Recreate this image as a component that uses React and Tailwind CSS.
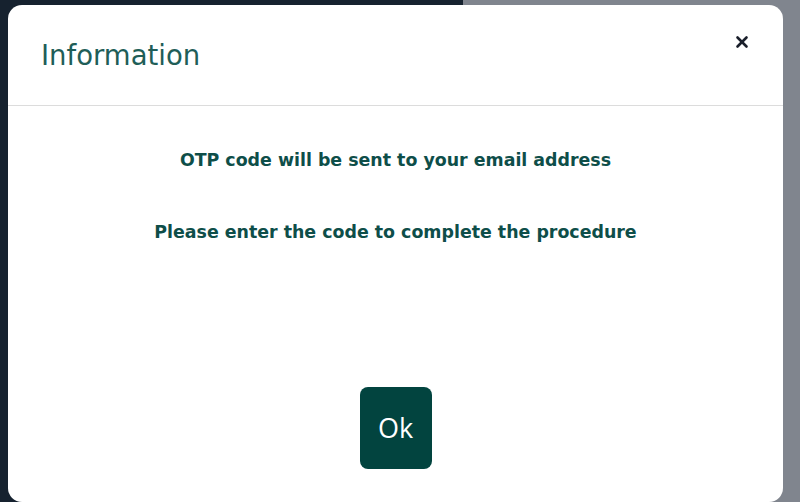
import { X } from "lucide-react";

export default function App() {
  return (
    <div className="relative h-[502px] w-[800px] overflow-hidden">
      {/* page behind the dialog */}
      <div className="flex h-full w-full">
        <div className="w-[463px] bg-[#16222f]" />
        <div className="flex-1 bg-[#80858e]" />
      </div>

      {/* dialog */}
      <div
        className="absolute left-[8px] top-[5px] flex h-[497px] w-[775px] flex-col rounded-[14px] bg-white"
        style={{ fontFamily: '"DejaVu Sans", Verdana, sans-serif' }}
      >
        <div className="flex h-[101px] items-start justify-between border-b border-[#dcdcdc] pl-[33px] pr-[32px]">
          <h2 className="mt-[32px] text-[27.5px] leading-[36px] font-normal text-[#1f5e58]">
            Information
          </h2>
          <button className="mt-[28px] text-[#1a1f2b]">
            <X className="h-[18px] w-[18px]" strokeWidth={3.5} />
          </button>
        </div>

        <div className="flex flex-1 flex-col items-center">
          <p className="mt-[42px] text-[17.4px] leading-[24px] font-bold text-[#0e4e49]">
            OTP code will be sent to your email address
          </p>
          <p className="mt-[48px] text-[17.4px] leading-[24px] font-bold text-[#0e4e49]">
            Please enter the code to complete the procedure
          </p>
          <button
            className="mt-[143px] flex h-[82px] w-[72px] items-center justify-center rounded-[8px] bg-[#02443f] text-[27px] text-white"
            style={{ fontFamily: '"Open Sans", sans-serif' }}
          >
            Ok
          </button>
        </div>
      </div>
    </div>
  );
}
